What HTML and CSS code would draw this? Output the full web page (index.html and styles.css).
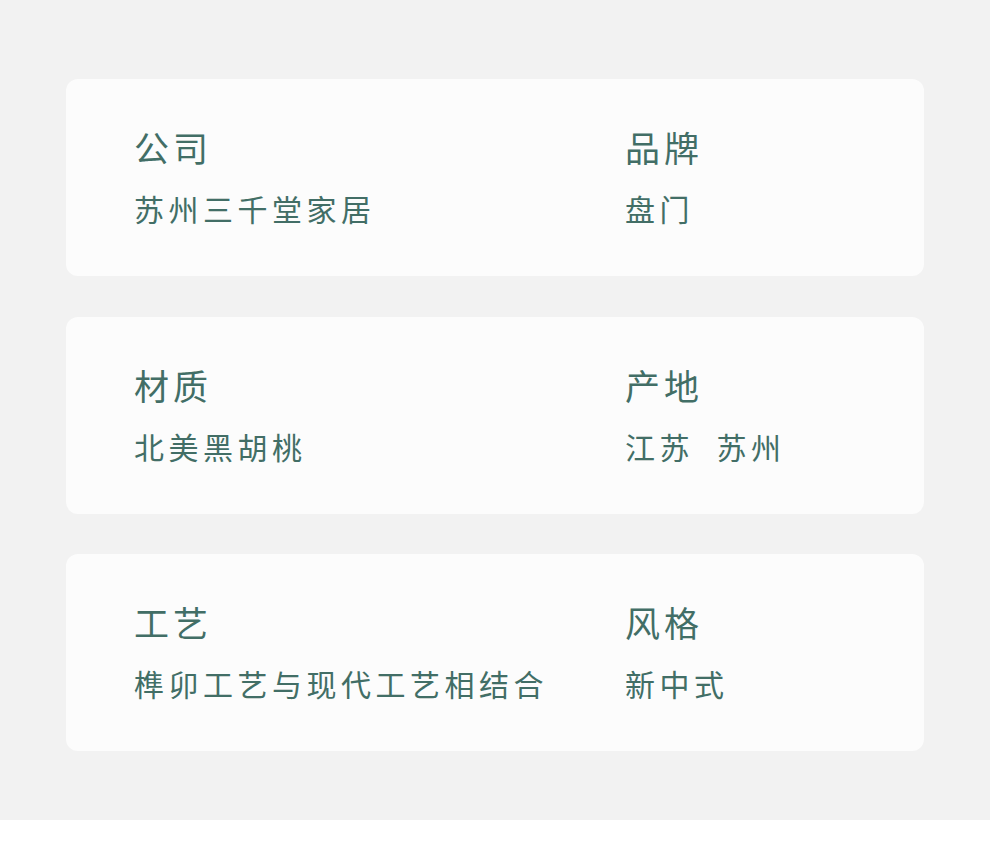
FILE: index.html
```html
<!DOCTYPE html>
<html lang="zh">
<head>
<meta charset="utf-8">
<link rel="stylesheet" href="styles.css">
</head>
<body>
<main class="page">
  <section class="card">
    <div class="col"><div class="label">公司</div><div class="value">苏州三千堂家居</div></div>
    <div class="col"><div class="label">品牌</div><div class="value">盘门</div></div>
  </section>
  <section class="card">
    <div class="col"><div class="label">材质</div><div class="value">北美黑胡桃</div></div>
    <div class="col"><div class="label">产地</div><div class="value">江苏&nbsp;&nbsp;苏州</div></div>
  </section>
  <section class="card">
    <div class="col"><div class="label">工艺</div><div class="value">榫卯工艺与现代工艺相结合</div></div>
    <div class="col"><div class="label">风格</div><div class="value">新中式</div></div>
  </section>
</main>
</body>
</html>
```

FILE: styles.css
```css
html, body {
  margin: 0;
  padding: 0;
  background: #ffffff;
}
body {
  font-family: "Noto Sans CJK SC", "Noto Sans", sans-serif;
  color: #426e66;
}
.page {
  background: #f2f2f2;
  padding: 79px 66px 69px;
  display: flex;
  flex-direction: column;
  gap: 40.5px;
}
.card {
  background: #fcfcfc;
  border-radius: 12px;
  height: 197px;
  flex: 0 0 197px;
  box-sizing: border-box;
  padding: 48px 0 0 68px;
  display: grid;
  grid-template-columns: 491px auto;
}
.label {
  font-size: 35px;
  line-height: 40px;
  letter-spacing: 4px;
}
.value {
  margin-top: 21px;
  font-size: 30px;
  line-height: 40px;
  letter-spacing: 4.5px;
}
```
